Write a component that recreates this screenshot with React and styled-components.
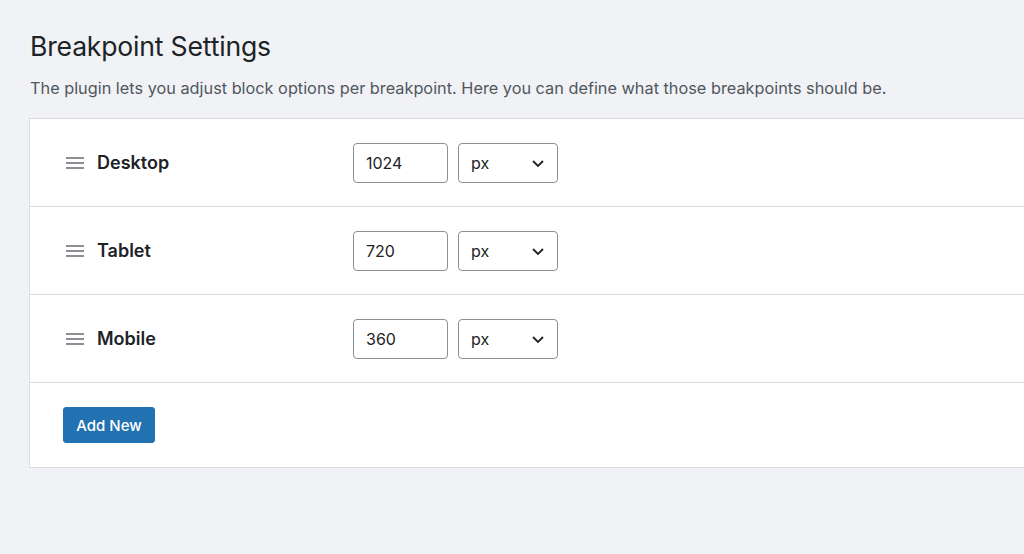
import React from "react";
import styled, { createGlobalStyle } from "styled-components";

const Global = createGlobalStyle`
  html, body { margin: 0; padding: 0; background: #f0f2f5; }
  body { font-family: Inter, "Noto Sans", sans-serif; color: #1d2327; }
`;

const Page = styled.div`
  padding: 28px 0 0 30px;
  height: 554px;
  box-sizing: border-box;
  overflow: hidden;
`;

const Title = styled.h1`
  margin: 0;
  font-size: 26.6px;
  font-weight: 400;
  line-height: 36px;
  color: #1d2327;
  letter-spacing: -0.2px;
`;

const Description = styled.p`
  margin: 12px 0 0;
  font-size: 16.3px;
  line-height: 24px;
  color: #50575e;
`;

const Panel = styled.div`
  margin-top: 18px;
  margin-left: -1px;
  width: calc(100% + 40px);
  background: #fff;
  border: 1px solid #dcdcde;
`;

const Row = styled.div`
  display: flex;
  align-items: center;
  height: 88px;
  padding-left: 36px;
  border-bottom: 1px solid #dcdcde;
  box-sizing: border-box;
`;

const Handle = styled.span`
  display: flex;
  width: 18px;
  margin-right: 13px;
  color: #8c8f94;
`;

const Label = styled.span`
  width: 256px;
  font-size: 18px;
  font-weight: 600;
  color: #1d2327;
`;

const NumberInput = styled.input`
  width: 95px;
  height: 40px;
  box-sizing: border-box;
  border: 1px solid #8c8f94;
  border-radius: 4px;
  padding: 0 12px;
  font: inherit;
  font-size: 16px;
  color: #1d2327;
  outline: none;
`;

const SelectBox = styled.div`
  margin-left: 10px;
  width: 100px;
  height: 40px;
  box-sizing: border-box;
  border: 1px solid #8c8f94;
  border-radius: 4px;
  display: flex;
  align-items: center;
  justify-content: space-between;
  padding: 0 12px;
  font-size: 16px;
  color: #1d2327;
`;

const Footer = styled.div`
  padding: 24px 0 24px 33px;
`;

const Button = styled.button`
  width: 92px;
  height: 36px;
  background: #2271b1;
  border: 1px solid #2271b1;
  border-radius: 3px;
  color: #fff;
  font: inherit;
  font-size: 15px;
  font-weight: 500;
  cursor: pointer;
`;

const HandleIcon = () => (
  <svg width="18" height="14" viewBox="0 0 18 14">
    <rect x="0" y="1" width="18" height="2" fill="currentColor" />
    <rect x="0" y="6" width="18" height="2" fill="currentColor" />
    <rect x="0" y="11" width="18" height="2" fill="currentColor" />
  </svg>
);

const Chevron = () => (
  <svg width="14" height="14" viewBox="0 0 14 14">
    <path d="M2 5l5 5 5-5" fill="none" stroke="#1d2327" strokeWidth="1.8" />
  </svg>
);

const rows = [
  { name: "Desktop", value: "1024" },
  { name: "Tablet", value: "720" },
  { name: "Mobile", value: "360" },
];

export default function App() {
  return (
    <>
      <Global />
      <Page>
        <Title>Breakpoint Settings</Title>
        <Description>
          The plugin lets you adjust block options per breakpoint. Here you can define what those breakpoints should be.
        </Description>
        <Panel>
          {rows.map((r) => (
            <Row key={r.name}>
              <Handle><HandleIcon /></Handle>
              <Label>{r.name}</Label>
              <NumberInput defaultValue={r.value} />
              <SelectBox>
                <span>px</span>
                <Chevron />
              </SelectBox>
            </Row>
          ))}
          <Footer>
            <Button>Add New</Button>
          </Footer>
        </Panel>
      </Page>
    </>
  );
}
